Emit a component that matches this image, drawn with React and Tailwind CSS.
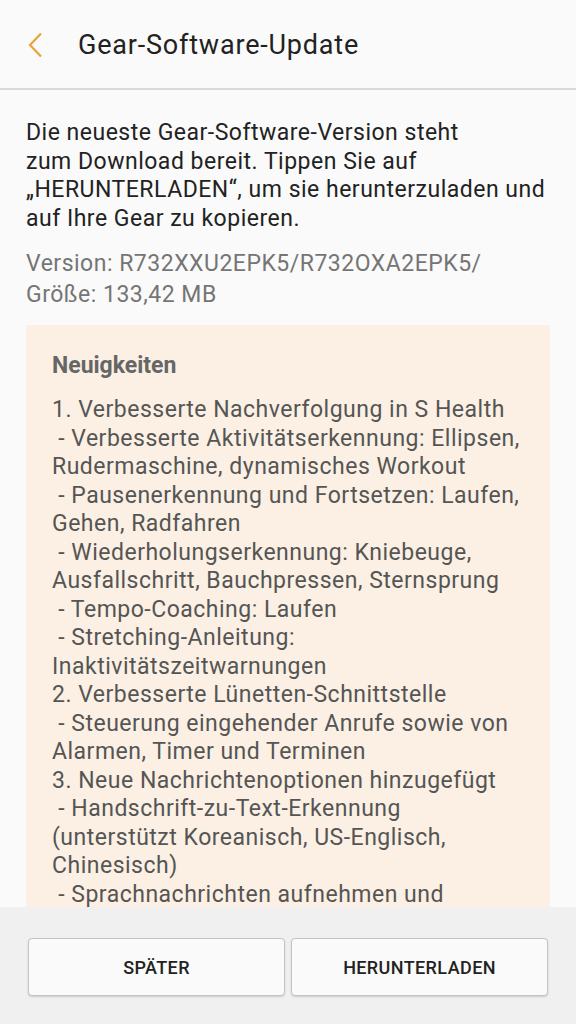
import React from 'react';

const lines = [
  '1. Verbesserte Nachverfolgung in S Health',
  ' - Verbesserte Aktivitätserkennung: Ellipsen,',
  'Rudermaschine, dynamisches Workout',
  ' - Pausenerkennung und Fortsetzen: Laufen,',
  'Gehen, Radfahren',
  ' - Wiederholungserkennung: Kniebeuge,',
  'Ausfallschritt, Bauchpressen, Sternsprung',
  ' - Tempo-Coaching: Laufen',
  ' - Stretching-Anleitung:',
  'Inaktivitätszeitwarnungen',
  '2. Verbesserte Lünetten-Schnittstelle',
  ' - Steuerung eingehender Anrufe sowie von',
  'Alarmen, Timer und Terminen',
  '3. Neue Nachrichtenoptionen hinzugefügt',
  ' - Handschrift-zu-Text-Erkennung',
  '(unterstützt Koreanisch, US-Englisch,',
  'Chinesisch)',
  ' - Sprachnachrichten aufnehmen und',
  'senden',
];

export default function App() {
  return (
    <div
      className="h-[1024px] w-[576px] flex flex-col bg-[#fafafa] overflow-hidden"
      style={{ fontFamily: 'Roboto, "Noto Sans", sans-serif' }}
    >
      {/* Header */}
      <div className="h-[90px] shrink-0 flex items-center border-b-2 border-[#d9d9d9]">
        <svg width="16" height="26" viewBox="0 0 16 26" className="ml-[28px] mt-[2px]">
          <path d="M13 1.5 L2 13 L13 24.5" fill="none" stroke="#e9a23b" strokeWidth="2.2" />
        </svg>
        <h1 className="ml-[34px] mt-[2px] text-[27px] tracking-[0.8px] text-[#222222] leading-none">Gear-Software-Update</h1>
      </div>

      {/* Content */}
      <div className="flex-1 overflow-hidden px-[26px]">
        <p className="mt-[29px] text-[23px] tracking-[0.5px] leading-[28.5px] text-[#222222]">
          Die neueste Gear-Software-Version steht
          <br />
          zum Download bereit. Tippen Sie auf
          <br />
          „HERUNTERLADEN“, um sie herunterzuladen und
          <br />
          auf Ihre Gear zu kopieren.
        </p>
        <p className="mt-[15px] text-[23px] tracking-[0.5px] leading-[31px] text-[#757575]">
          Version: R732XXU2EPK5/R732OXA2EPK5/
          <br />
          Größe: 133,42 MB
        </p>
        <div className="mt-[15px] bg-[#fbf0e3] px-[26px] pt-[26px] pb-[20px]">
          <h2 className="text-[23px] font-bold leading-[30px] text-[#666666]">Neuigkeiten</h2>
          <div className="mt-[15px] text-[23px] tracking-[0.5px] leading-[28.5px] text-[#555555]">
            {lines.map((l, i) => (
              <div key={i} className="whitespace-pre">{l}</div>
            ))}
          </div>
        </div>
      </div>

      {/* Bottom bar */}
      <div className="h-[117px] shrink-0 bg-[#f0f0f0] flex gap-[6px] px-[28px] pt-[31px]">
        <button className="h-[58px] flex-1 rounded-[4px] border border-[#c4c4c4] bg-[#fafafa] shadow-[0_1px_2px_rgba(0,0,0,0.15)] text-[18px] tracking-[0.4px] font-medium text-[#222222]">
          SPÄTER
        </button>
        <button className="h-[58px] flex-1 rounded-[4px] border border-[#c4c4c4] bg-[#fafafa] shadow-[0_1px_2px_rgba(0,0,0,0.15)] text-[18px] tracking-[0.4px] font-medium text-[#222222]">
          HERUNTERLADEN
        </button>
      </div>
    </div>
  );
}
